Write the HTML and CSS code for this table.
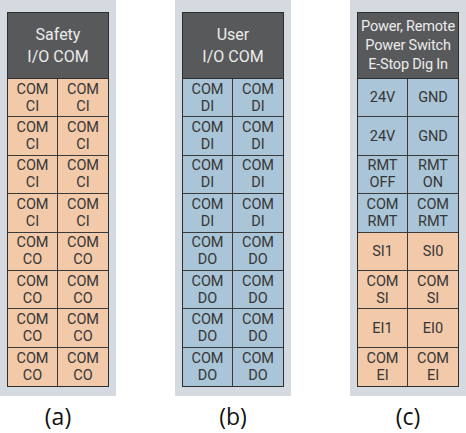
FILE: index.html
```html
<!DOCTYPE html>
<html lang="en">

<head>
    <meta charset="UTF-8">
    <title>I/O COM Terminals</title>
    <link rel="stylesheet" href="styles.css">
</head>

<body>
    <div class="figure">

        <div class="column">
            <div class="panel">
                <div class="block">
                    <div class="head">Safety<br>I/O COM</div>
                    <div class="pins orange">
                        <div class="pin">COM<br>CI</div><div class="pin">COM<br>CI</div>
                        <div class="pin">COM<br>CI</div><div class="pin">COM<br>CI</div>
                        <div class="pin">COM<br>CI</div><div class="pin">COM<br>CI</div>
                        <div class="pin">COM<br>CI</div><div class="pin">COM<br>CI</div>
                        <div class="pin">COM<br>CO</div><div class="pin">COM<br>CO</div>
                        <div class="pin">COM<br>CO</div><div class="pin">COM<br>CO</div>
                        <div class="pin">COM<br>CO</div><div class="pin">COM<br>CO</div>
                        <div class="pin">COM<br>CO</div><div class="pin">COM<br>CO</div>
                    </div>
                </div>
            </div>
            <div class="caption">(a)</div>
        </div>

        <div class="column">
            <div class="panel">
                <div class="block">
                    <div class="head">User<br>I/O COM</div>
                    <div class="pins blue">
                        <div class="pin">COM<br>DI</div><div class="pin">COM<br>DI</div>
                        <div class="pin">COM<br>DI</div><div class="pin">COM<br>DI</div>
                        <div class="pin">COM<br>DI</div><div class="pin">COM<br>DI</div>
                        <div class="pin">COM<br>DI</div><div class="pin">COM<br>DI</div>
                        <div class="pin">COM<br>DO</div><div class="pin">COM<br>DO</div>
                        <div class="pin">COM<br>DO</div><div class="pin">COM<br>DO</div>
                        <div class="pin">COM<br>DO</div><div class="pin">COM<br>DO</div>
                        <div class="pin">COM<br>DO</div><div class="pin">COM<br>DO</div>
                    </div>
                </div>
            </div>
            <div class="caption">(b)</div>
        </div>

        <div class="column">
            <div class="panel">
                <div class="block">
                    <div class="head small">Power, Remote<br>Power Switch<br>E-Stop Dig In</div>
                    <div class="pins">
                        <div class="pin blue">24V</div><div class="pin blue">GND</div>
                        <div class="pin blue">24V</div><div class="pin blue">GND</div>
                        <div class="pin blue">RMT<br>OFF</div><div class="pin blue">RMT<br>ON</div>
                        <div class="pin blue">COM<br>RMT</div><div class="pin blue">COM<br>RMT</div>
                        <div class="pin orange">SI1</div><div class="pin orange">SI0</div>
                        <div class="pin orange">COM<br>SI</div><div class="pin orange">COM<br>SI</div>
                        <div class="pin orange">EI1</div><div class="pin orange">EI0</div>
                        <div class="pin orange">COM<br>EI</div><div class="pin orange">COM<br>EI</div>
                    </div>
                </div>
            </div>
            <div class="caption">(c)</div>
        </div>

    </div>
</body>

</html>
```

FILE: styles.css
```css
* {
    margin: 0;
    padding: 0;
    box-sizing: border-box;
}

body {
    background-color: #ffffff;
    font-family: Roboto, "Liberation Sans", sans-serif;
    width: 466px;
    height: 433px;
    overflow: hidden;
}

.figure {
    display: flex;
    gap: 59px;
}

.column {
    width: 116px;
    display: flex;
    flex-direction: column;
    align-items: center;
}

.panel {
    width: 116px;
    height: 396px;
    background-color: #d5dae0;
    padding: 12px 7px 0 7px;
}

.block {
    border: 1px solid #2e2e2e;
}

.head {
    height: 66px;
    background-color: #58595b;
    color: #ececec;
    font-size: 16px;
    line-height: 22px;
    display: flex;
    align-items: center;
    justify-content: center;
    text-align: center;
    border-bottom: 1px solid #2e2e2e;
}

.head.small {
    font-size: 14.5px;
    line-height: 19px;
    letter-spacing: -0.2px;
}

.pins {
    display: grid;
    grid-template-columns: 1fr 1fr;
    grid-auto-rows: 38.4px;
}

.orange,
.pins.orange .pin {
    background-color: #f2c9a9;
}

.blue,
.pins.blue .pin {
    background-color: #a9c5d7;
}

.pin {
    display: flex;
    align-items: center;
    justify-content: center;
    text-align: center;
    font-size: 14.5px;
    line-height: 17px;
    color: #363636;
    border-bottom: 1px solid #3a3a3a;
}

.pin:nth-child(odd) {
    border-right: 1px solid #3a3a3a;
}

.pin:nth-last-child(-n+2) {
    border-bottom: none;
}

.caption {
    margin-top: 5px;
    font-family: "Open Sans", sans-serif;
    font-size: 23px;
    line-height: 30px;
    color: #111111;
}
```
